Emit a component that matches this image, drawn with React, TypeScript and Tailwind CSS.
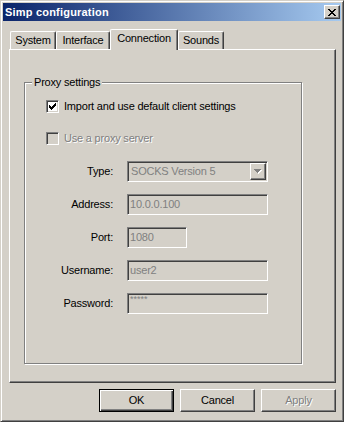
import React from "react";

const raised =
  "border border-t-white border-l-white border-r-[#404040] border-b-[#404040] shadow-[inset_-1px_-1px_0_#808080]";
const sunken =
  "border border-t-[#808080] border-l-[#808080] border-r-white border-b-white shadow-[inset_1px_1px_0_#404040,inset_-1px_-1px_0_#d4d0c8]";
const emboss = "text-[#808080] [text-shadow:1px_1px_0_#ffffff]";

function CheckBox({ checked, disabled }: { checked?: boolean; disabled?: boolean }) {
  return (
    <div
      className={`w-[13px] h-[13px] shrink-0 flex items-center justify-center ${sunken} ${
        disabled ? "bg-[#d4d0c8]" : "bg-white"
      }`}
    >
      {checked && (
        <svg width="7" height="7" viewBox="0 0 7 7" shapeRendering="crispEdges">
          <path
            d="M0 2h1v3h-1z M1 3h1v3h-1z M2 4h1v3h-1z M3 3h1v3h-1z M4 2h1v3h-1z M5 1h1v3h-1z M6 0h1v3h-1z"
            fill="#000"
          />
        </svg>
      )}
    </div>
  );
}

function Field({ value, width, small }: { value: string; width: string; small?: boolean }) {
  return (
    <div className={`${width} h-[21px] ${sunken} bg-[#d4d0c8] flex ${small ? "items-start pt-[1px]" : "items-center"} pl-[2px] text-[#808080]`}>
      <span className={small ? "text-[9px] leading-[9px] tracking-[0px]" : ""}>{value}</span>
    </div>
  );
}

function Row({ label, children }: { label: string; children: React.ReactNode }) {
  return (
    <div className="flex items-center h-[21px]">
      <div className="w-[88px] text-right">{label}</div>
      <div className="ml-[14px]">{children}</div>
    </div>
  );
}

function Tab({ label, width, selected }: { label: string; width: string; selected?: boolean }) {
  if (selected) {
    return (
      <div
        className={`${width} h-[21px] mb-[-1px] relative z-10 bg-[#d4d0c8] border-l border-t border-r border-l-white border-t-white border-r-[#404040] rounded-t-[2px] shadow-[inset_-1px_0_0_#808080] flex justify-center pt-[2px]`}
      >
        {label}
      </div>
    );
  }
  return (
    <div
      className={`${width} h-[18px] bg-[#d4d0c8] border-l border-t border-r border-l-white border-t-white border-r-[#404040] rounded-t-[2px] shadow-[inset_-1px_0_0_#808080] flex justify-center pt-[2px]`}
    >
      {label}
    </div>
  );
}

function Button({ label, def, disabled }: { label: string; def?: boolean; disabled?: boolean }) {
  if (def) {
    return (
      <div className="w-[75px] h-[23px] border border-black bg-[#d4d0c8] shadow-[inset_1px_1px_0_#ffffff,inset_-1px_-1px_0_#404040,inset_-2px_-2px_0_#808080] flex items-center justify-center">
        {label}
      </div>
    );
  }
  return (
    <div className={`w-[75px] h-[23px] ${raised} bg-[#d4d0c8] flex items-center justify-center`}>
      <span className={disabled ? emboss : ""}>{label}</span>
    </div>
  );
}

export default function App() {
  return (
    <div className="w-[344px] h-[422px] bg-[#d4d0c8] border border-t-[#d4d0c8] border-l-[#d4d0c8] border-r-[#404040] border-b-[#404040] shadow-[inset_1px_1px_0_#ffffff,inset_-1px_-1px_0_#808080] p-[2px] flex flex-col font-['Liberation_Sans',Arial,sans-serif] text-[11px] leading-[13px] tracking-[-0.2px] text-black select-none">
      {/* Title bar */}
      <div className="h-[18px] shrink-0 flex items-center justify-between pl-[2px] pr-[1px] bg-[linear-gradient(to_right,#0a246a,#a6caf0)]">
        <span className="text-white font-bold tracking-[0.2px]">Simp configuration</span>
        <div className={`w-[16px] h-[14px] ${raised} bg-[#d4d0c8] flex items-center justify-center`}>
          <svg width="8" height="7" viewBox="0 0 8 7" shapeRendering="crispEdges">
            <path
              d="M0 0h2v1h-2z M6 0h2v1h-2z M1 1h2v1h-2z M5 1h2v1h-2z M2 2h4v1h-4z M3 3h2v1h-2z M2 4h4v1h-4z M1 5h2v1h-2z M5 5h2v1h-2z M0 6h2v1h-2z M6 6h2v1h-2z"
              fill="#000"
            />
          </svg>
        </div>
      </div>

      {/* Body */}
      <div className="px-[6px] flex flex-col">
        <div className="mt-[8px] h-[20px] flex items-end pl-[1px]">
          <Tab label="System" width="w-[46px]" />
          <Tab label="Interface" width="w-[54px]" />
          <Tab label="Connection" width="w-[68px]" selected />
          <Tab label="Sounds" width="w-[46px]" />
        </div>

        <div className="w-[327px] h-[334px] border border-t-white border-l-white border-r-[#404040] border-b-[#404040] shadow-[inset_-1px_-1px_0_#808080] pt-[32px] pl-[14px]">
          <div className="relative w-[278px] h-[282px] border border-[#808080] shadow-[inset_1px_1px_0_#ffffff,1px_1px_0_#ffffff]">
            <div className="absolute left-[7px] top-[-7px] px-[2px] bg-[#d4d0c8]">Proxy settings</div>

            <div className="flex flex-col pt-[17px]">
              <div className="flex items-center gap-[5px] pl-[21px]">
                <CheckBox checked />
                <span>Import and use default client settings</span>
              </div>
              <div className="flex items-center gap-[5px] pl-[21px] mt-[19px]">
                <CheckBox disabled />
                <span className={emboss}>Use a proxy server</span>
              </div>

              <div className="flex flex-col gap-[12px] mt-[16px]">
                <Row label="Type:">
                  <div className={`w-[141px] h-[21px] ${sunken} bg-[#d4d0c8] flex items-center`}>
                    <span className="flex-1 pl-[3px] text-[#808080]">SOCKS Version 5</span>
                    <div className={`w-[16px] h-[17px] mr-[1px] ${raised} bg-[#d4d0c8] flex items-center justify-center`}>
                      <svg width="8" height="5" viewBox="0 0 8 5" shapeRendering="crispEdges">
                        <path d="M1 1h7v1h-7z M2 2h5v1h-5z M3 3h3v1h-3z M4 4h1v1h-1z" fill="#ffffff" />
                        <path d="M0 0h7v1h-7z M1 1h5v1h-5z M2 2h3v1h-3z M3 3h1v1h-1z" fill="#808080" />
                      </svg>
                    </div>
                  </div>
                </Row>
                <Row label="Address:">
                  <Field value="10.0.0.100" width="w-[141px]" />
                </Row>
                <Row label="Port:">
                  <Field value="1080" width="w-[60px]" />
                </Row>
                <Row label="Username:">
                  <Field value="user2" width="w-[141px]" />
                </Row>
                <Row label="Password:">
                  <Field value="*****" width="w-[141px]" small />
                </Row>
              </div>
            </div>
          </div>
        </div>

        <div className="w-[327px] mt-[6px] flex justify-end gap-[6px]">
          <Button label="OK" def />
          <Button label="Cancel" />
          <Button label="Apply" disabled />
        </div>
      </div>
    </div>
  );
}
